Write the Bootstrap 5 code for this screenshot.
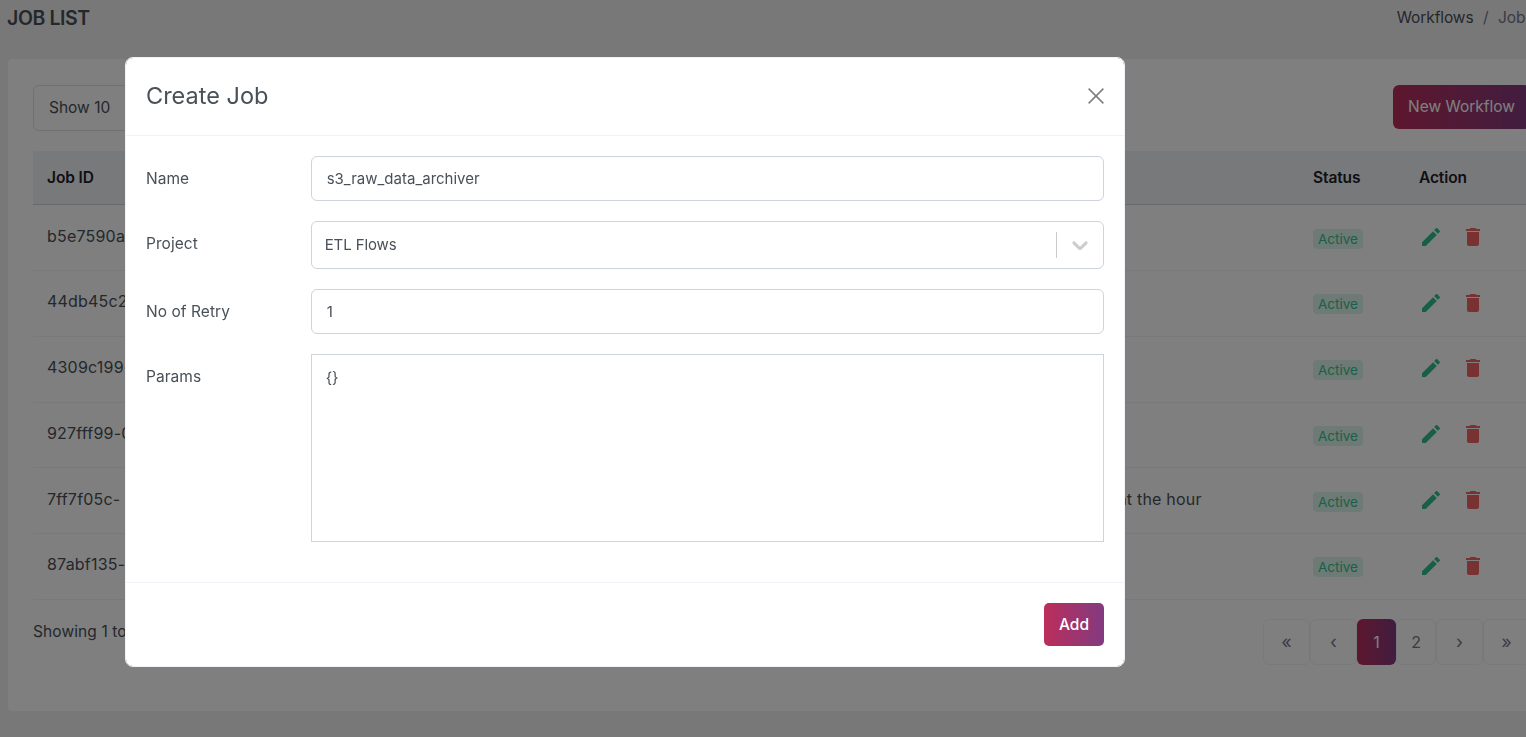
<!DOCTYPE html>
<html lang="en">
<head>
<meta charset="utf-8">
<title>Job List</title>
<link href="https://cdn.jsdelivr.net/npm/bootstrap@5.3.0/dist/css/bootstrap.min.css" rel="stylesheet">
<style>
html,body{height:100%;overflow:hidden}
body{background:#f1f1f2;font-family:Inter,"Liberation Sans",sans-serif;font-size:15.5px;color:#495057;letter-spacing:-.1px}
.page-wrap{width:1563px;padding:0 8px}
.head-bar{height:59px;padding-bottom:22px}
.head-bar h1{font-size:19.5px;font-weight:600;color:#495057;margin:0 0 0 -1px;letter-spacing:-.4px}
.crumbs{font-size:15.5px;margin:-1px 0 0;--bs-breadcrumb-divider-color:#74788d;--bs-breadcrumb-item-padding-x:9.5px}
.crumbs .breadcrumb-item.active{color:#74788d}
.crumbs a{color:#495057;text-decoration:none}
.main-card{height:652px;padding:26px 25px;background:#fff;border:0;border-radius:4px}
.show-select{width:135px;height:46px;font-size:15.5px;color:#495057;padding-left:15px}
.grad-btn{background:linear-gradient(90deg,#bb2e5b,#823b80);color:#fff;border:0;font-size:15.5px;font-weight:500}
.grad-btn:hover{color:#fff}
.new-btn{height:44px;width:137px;padding:0;font-weight:400}
.job-table{table-layout:fixed;width:1497px;margin:20px 0 19px;color:#495057}
.job-table th{background:#eff2f7;color:#1e2126;font-size:15.5px;font-weight:600;height:53.75px;padding:0 14px;vertical-align:middle;border-bottom:1px solid #ced4da}
.job-table td{height:65.75px;padding:0 14px;font-size:16px;letter-spacing:.2px;vertical-align:middle;color:#495057;border-bottom:1px solid #eff2f7;white-space:nowrap;overflow:hidden}
.job-table td:nth-child(-n+3){padding-bottom:4px}
.state-tag{display:inline-block;height:20px;line-height:20px;padding:0 5px;font-size:13.5px;letter-spacing:0;font-weight:400;color:#34c38f;background:rgba(52,195,143,.18);border-radius:4px}
.act-icon{width:24px;height:24px;display:inline-block;vertical-align:middle}
.act-edit{fill:#2fc18a;margin:-5px 18px 0 0}
.act-del{fill:#f06464;margin-top:-5px}
.foot-note{margin-top:1px;letter-spacing:.1px}
.pager{margin:0;--bs-pagination-font-size:16px}
.pager .page-link{height:46px;width:47px;padding:0;display:flex;align-items:center;justify-content:center;color:#74788d;border:1px solid #eff2f7;border-radius:6px;margin:0}
.pager .page-item{margin:0}
.pager .page-item:not(:first-child) .page-link{margin-left:0}
.pager .page-item.active .page-link{width:39px;background:linear-gradient(90deg,#bb2e5b,#823b80);border:0;color:#fff}
.pager .num .page-link{width:40px}
.pager .arrow .page-link{font-size:18px;font-weight:400}
.job-dialog{max-width:1000px;margin:57px 0 0 125px}
.job-dialog .modal-content{border:1px solid #eff2f7;border-radius:8px;color:#495057}
.job-dialog .modal-header{height:78px;padding:0 20px 2px;border-bottom:1px solid #eff2f7}
.job-dialog .modal-title{font-size:23.5px;font-weight:400;color:#495057;letter-spacing:0}
.job-dialog .modal-body{padding:20px}
.job-dialog .modal-footer{padding:20px;border-top:1px solid #eff2f7}
.close-x{width:16px;height:16px;line-height:0;background:none}
.close-x svg{stroke:#7b7e82;stroke-width:1.5;display:block}
.field-line{--bs-gutter-x:30px;margin-bottom:20px}
.field-line .col-form-label{padding:10.5px 15px 0;font-size:15.5px;letter-spacing:.05px}
.field-input{height:45px;font-size:15px;color:#495057;padding:0 15px 1px;border-color:#ced4da;border-radius:6px}
.picker-box{height:48px;padding:0 10px 0 13px;border:1px solid #ced4da;border-radius:6px;background:#fff;font-size:15px}
.picker-sep{width:1px;height:26px;background:#ccc;margin-right:10px}
.picker-arrow{width:26px;height:26px;fill:#ccc}
.field-area{height:188px;border-radius:0;resize:none;padding:12px 14px;font-size:15px;color:#495057;border-color:#ced4da}
.add-btn{width:60px;height:43px;padding:0;border-radius:5px;margin:0}
</style>
</head>
<body class="modal-open">
<div class="page-wrap">
  <div class="head-bar d-flex justify-content-between align-items-center">
    <h1>JOB LIST</h1>
    <ol class="breadcrumb crumbs">
      <li class="breadcrumb-item"><a href="#">Workflows</a></li>
      <li class="breadcrumb-item active">Job List</li>
    </ol>
  </div>
  <div class="card main-card">
    <div class="d-flex justify-content-between align-items-start">
      <select class="form-select show-select"><option>Show 10</option></select>
      <button class="btn grad-btn new-btn" type="button">New Workflow</button>
    </div>
    <table class="table job-table">
      <colgroup><col style="width:569px"><col style="width:308px"><col style="width:389px"><col style="width:106px"><col style="width:125px"></colgroup>
      <thead><tr><th>Job ID</th><th>Name</th><th>Description</th><th>Status</th><th>Action</th></tr></thead>
      <tbody>
        <tr><td>b5e7590a-</td><td>daily_sales_load</td><td>Nightly load</td><td><span class="state-tag">Active</span></td><td><svg class="act-icon act-edit" viewBox="0 0 24 24"><path d="M20.71,7.04C21.1,6.65 21.1,6 20.71,5.63L18.37,3.29C18,2.9 17.35,2.9 16.96,3.29L15.12,5.12L18.87,8.87M3,17.25V21H6.75L17.81,9.93L14.06,6.18L3,17.25Z"/></svg><svg class="act-icon act-del" viewBox="0 0 24 24"><path d="M19,4H15.5L14.5,3H9.5L8.5,4H5V6H19M6,19A2,2 0 0,0 8,21H16A2,2 0 0,0 18,19V7H6V19Z"/></svg></td></tr>
        <tr><td>44db45c2-</td><td>customer_sync</td><td>CRM sync</td><td><span class="state-tag">Active</span></td><td><svg class="act-icon act-edit" viewBox="0 0 24 24"><path d="M20.71,7.04C21.1,6.65 21.1,6 20.71,5.63L18.37,3.29C18,2.9 17.35,2.9 16.96,3.29L15.12,5.12L18.87,8.87M3,17.25V21H6.75L17.81,9.93L14.06,6.18L3,17.25Z"/></svg><svg class="act-icon act-del" viewBox="0 0 24 24"><path d="M19,4H15.5L14.5,3H9.5L8.5,4H5V6H19M6,19A2,2 0 0,0 8,21H16A2,2 0 0,0 18,19V7H6V19Z"/></svg></td></tr>
        <tr><td>4309c199-</td><td>inventory_rollup</td><td>Weekly rollup</td><td><span class="state-tag">Active</span></td><td><svg class="act-icon act-edit" viewBox="0 0 24 24"><path d="M20.71,7.04C21.1,6.65 21.1,6 20.71,5.63L18.37,3.29C18,2.9 17.35,2.9 16.96,3.29L15.12,5.12L18.87,8.87M3,17.25V21H6.75L17.81,9.93L14.06,6.18L3,17.25Z"/></svg><svg class="act-icon act-del" viewBox="0 0 24 24"><path d="M19,4H15.5L14.5,3H9.5L8.5,4H5V6H19M6,19A2,2 0 0,0 8,21H16A2,2 0 0,0 18,19V7H6V19Z"/></svg></td></tr>
        <tr><td>927fff99-0</td><td>log_compactor</td><td>Compact logs</td><td><span class="state-tag">Active</span></td><td><svg class="act-icon act-edit" viewBox="0 0 24 24"><path d="M20.71,7.04C21.1,6.65 21.1,6 20.71,5.63L18.37,3.29C18,2.9 17.35,2.9 16.96,3.29L15.12,5.12L18.87,8.87M3,17.25V21H6.75L17.81,9.93L14.06,6.18L3,17.25Z"/></svg><svg class="act-icon act-del" viewBox="0 0 24 24"><path d="M19,4H15.5L14.5,3H9.5L8.5,4H5V6H19M6,19A2,2 0 0,0 8,21H16A2,2 0 0,0 18,19V7H6V19Z"/></svg></td></tr>
        <tr><td>7ff7f05c-</td><td>hourly_metrics</td><td>Collect metrics and runs at the hour</td><td><span class="state-tag">Active</span></td><td><svg class="act-icon act-edit" viewBox="0 0 24 24"><path d="M20.71,7.04C21.1,6.65 21.1,6 20.71,5.63L18.37,3.29C18,2.9 17.35,2.9 16.96,3.29L15.12,5.12L18.87,8.87M3,17.25V21H6.75L17.81,9.93L14.06,6.18L3,17.25Z"/></svg><svg class="act-icon act-del" viewBox="0 0 24 24"><path d="M19,4H15.5L14.5,3H9.5L8.5,4H5V6H19M6,19A2,2 0 0,0 8,21H16A2,2 0 0,0 18,19V7H6V19Z"/></svg></td></tr>
        <tr><td>87abf135-</td><td>report_builder</td><td>Build reports</td><td><span class="state-tag">Active</span></td><td><svg class="act-icon act-edit" viewBox="0 0 24 24"><path d="M20.71,7.04C21.1,6.65 21.1,6 20.71,5.63L18.37,3.29C18,2.9 17.35,2.9 16.96,3.29L15.12,5.12L18.87,8.87M3,17.25V21H6.75L17.81,9.93L14.06,6.18L3,17.25Z"/></svg><svg class="act-icon act-del" viewBox="0 0 24 24"><path d="M19,4H15.5L14.5,3H9.5L8.5,4H5V6H19M6,19A2,2 0 0,0 8,21H16A2,2 0 0,0 18,19V7H6V19Z"/></svg></td></tr>
      </tbody>
    </table>
    <div class="d-flex justify-content-between">
      <div class="foot-note">Showing 1 to</div>
      <ul class="pagination pager">
        <li class="page-item arrow"><a class="page-link" href="#">«</a></li>
        <li class="page-item arrow"><a class="page-link" href="#">‹</a></li>
        <li class="page-item active"><a class="page-link" href="#">1</a></li>
        <li class="page-item num"><a class="page-link" href="#">2</a></li>
        <li class="page-item arrow"><a class="page-link" href="#">›</a></li>
        <li class="page-item arrow"><a class="page-link" href="#">»</a></li>
      </ul>
    </div>
  </div>
</div>
<div class="modal-backdrop show"></div>
<div class="modal d-block" tabindex="-1">
  <div class="modal-dialog job-dialog">
    <div class="modal-content">
      <div class="modal-header justify-content-between">
        <h5 class="modal-title">Create Job</h5>
        <button type="button" class="btn close-x p-0 border-0" aria-label="Close"><svg width="16" height="16" viewBox="0 0 16 16"><path d="M.6.6 15.4 15.4M15.4.6.6 15.4"/></svg></button>
      </div>
      <div class="modal-body">
        <div class="row field-line">
          <label class="col-2 col-form-label">Name</label>
          <div class="col-10"><input class="form-control field-input" value="s3_raw_data_archiver"></div>
        </div>
        <div class="row field-line">
          <label class="col-2 col-form-label">Project</label>
          <div class="col-10">
            <div class="picker-box d-flex align-items-center">
              <span class="flex-grow-1">ETL Flows</span>
              <span class="picker-sep"></span>
              <svg class="picker-arrow" viewBox="0 0 20 20"><path d="M4.516 7.548c0.436-0.446 1.043-0.481 1.576 0l3.908 3.747 3.908-3.747c0.533-0.481 1.141-0.446 1.576 0 0.436 0.445 0.408 1.197 0 1.615-0.406 0.418-4.695 4.502-4.695 4.502-0.217 0.223-0.502 0.335-0.789 0.335s-0.572-0.112-0.79-0.335c0 0-4.287-4.084-4.695-4.502s-0.436-1.17 0-1.615z"/></svg>
            </div>
          </div>
        </div>
        <div class="row field-line">
          <label class="col-2 col-form-label">No of Retry</label>
          <div class="col-10"><input class="form-control field-input" value="1"></div>
        </div>
        <div class="row field-line">
          <label class="col-2 col-form-label">Params</label>
          <div class="col-10"><textarea class="form-control field-area">{}</textarea></div>
        </div>
      </div>
      <div class="modal-footer">
        <button class="btn grad-btn add-btn" type="button">Add</button>
      </div>
    </div>
  </div>
</div>
<script src="https://cdn.jsdelivr.net/npm/bootstrap@5.3.0/dist/js/bootstrap.bundle.min.js"></script>
</body>
</html>
